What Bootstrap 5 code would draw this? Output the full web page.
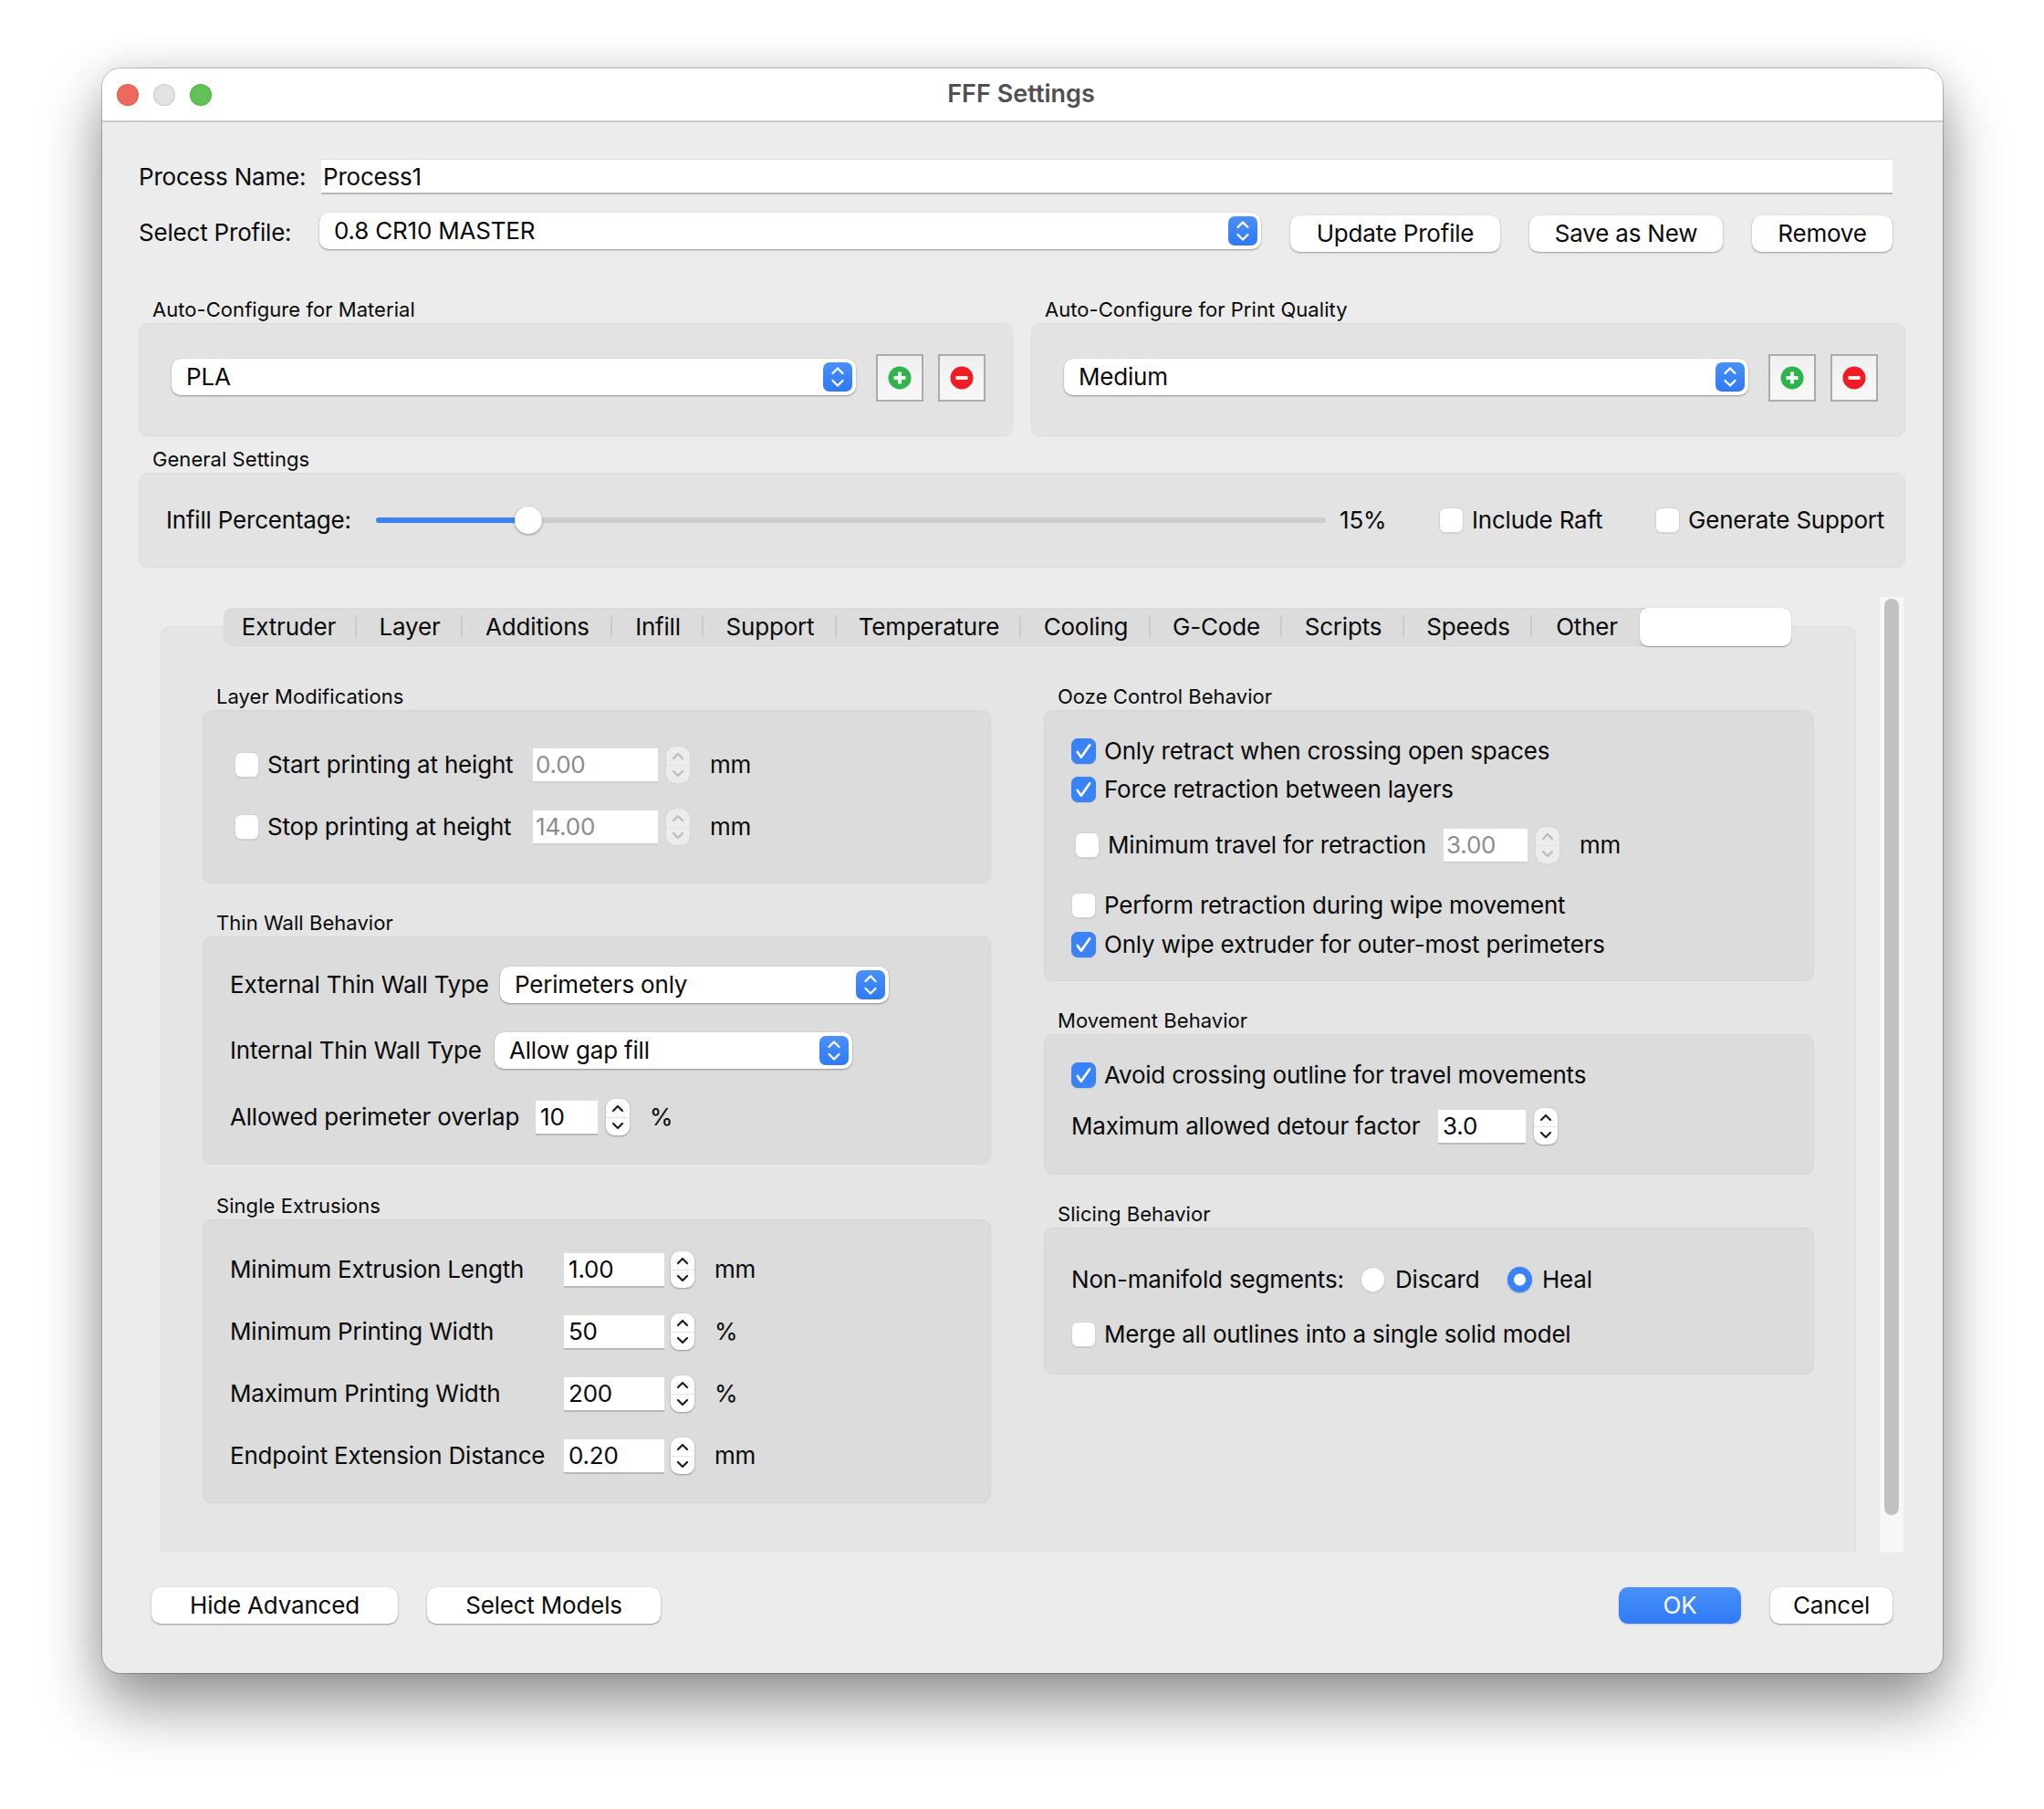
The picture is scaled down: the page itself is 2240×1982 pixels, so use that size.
<!DOCTYPE html>
<html lang="en">
<head>
<meta charset="utf-8">
<title>FFF Settings</title>
<link href="https://cdn.jsdelivr.net/npm/bootstrap@5.3.0/dist/css/bootstrap.min.css" rel="stylesheet">
<style>
html,body{background:#fff;margin:0;min-height:1982px}
body{font-family:Inter,"Liberation Sans",sans-serif;font-size:26px;letter-spacing:-.2px;color:#0a0a0a;line-height:1.2}
label{flex:none}
.x-win{margin:75px 0 0 112px;width:2017px;height:1758px;border-radius:20px;background:#ececec;box-shadow:0 0 0 1px rgba(0,0,0,.22),0 36px 68px rgba(0,0,0,.42),0 0 40px rgba(0,0,0,.1);overflow:hidden}
.x-title{height:59px;background:#fff;border-bottom:2px solid #cbcbcb;display:grid;grid-template-columns:1fr auto 1fr;align-items:center;padding:0 19px 0 16px}
.x-title-text{font-weight:600;color:#505050;font-size:27px;letter-spacing:0}
.x-light{width:24px;height:24px;border-radius:50%;border:1px solid rgba(0,0,0,.12)}
.x-red{background:#ee6a5f}.x-grey{background:#e3e3e3}.x-green{background:#5fc454}
.x-main{padding:40px 41px 0 40px}
.x-r1{height:39px;margin-right:14px}
.x-r2{margin-top:20px;height:40px}
.x-l1{width:200px}.x-l2{width:198px;margin-top:3px}
.x-field.form-control{flex:none;height:39px;border:0;border-top:1px solid #dedede;border-bottom:2px solid #b9b9b9;border-radius:0;background:#fff;padding:0 3px;font-size:26px;letter-spacing:-.2px;color:#0a0a0a;box-shadow:none;line-height:1}
.x-grow.form-control{flex:1 1 0;width:auto;padding-left:2px}
.x-field.form-control:disabled{color:#8c8c8c;background:#fff;opacity:1;border-bottom-color:#cfcfcf}
.x-sel.form-select{flex:none;height:40px;border:0;border-radius:10px;background-color:#fff;padding:0 44px 0 16px;font-size:26px;letter-spacing:-.2px;color:#0a0a0a;line-height:40px;box-shadow:0 1px 2px rgba(0,0,0,.35),0 0 1px rgba(0,0,0,.2);background-image:url("data:image/svg+xml,%3Csvg xmlns='http://www.w3.org/2000/svg' viewBox='0 0 32 32'%3E%3Cdefs%3E%3ClinearGradient id='g' x1='0' y1='0' x2='0' y2='1'%3E%3Cstop offset='0' stop-color='%234a90f8'/%3E%3Cstop offset='1' stop-color='%232f7af5'/%3E%3C/linearGradient%3E%3C/defs%3E%3Crect width='32' height='32' rx='7' fill='url(%23g)'/%3E%3Cpath d='M10.5 12 16 6.5l5.500 5.500M10.500 20l5.500 5.500 5.500-5.500' fill='none' stroke='%23fff' stroke-width='2.300' stroke-linecap='round' stroke-linejoin='round'/%3E%3C/svg%3E");background-size:32px 32px;background-position:right 4px center;background-repeat:no-repeat}
.x-btn.btn{flex:none;height:40px;padding:0;background:#fff;border:0;border-radius:10px;color:#0a0a0a;font-size:26px;letter-spacing:-.2px;box-shadow:0 1px 2px rgba(0,0,0,.35),0 0 1px rgba(0,0,0,.2);line-height:38px}
.x-ok.btn{background:linear-gradient(#4a90f8,#2f7af5);color:#fff;box-shadow:0 1px 2px rgba(0,0,0,.15)}
.x-b1.btn{width:230px;margin:6px 0 0 32px}.x-b2.btn{width:212px;margin:6px 0 0 32px}.x-b3.btn{width:154px;margin:6px 0 0 32px}
.x-prof.form-select{width:1032px}
.x-r3{margin-top:51px}
.x-half{width:958px}
.x-cap{height:30px;padding-left:15px;font-size:22px;letter-spacing:.05px;line-height:30px}
.x-box{background:#e3e3e3;border:1px solid #dcdcdc;border-radius:10px}
.x-boxa{height:124px;padding:33px 0 0 35px}
.x-boxb{height:104px;padding:0 0 0 29px}
.x-gap{margin-left:20px}
.x-m1.form-select{width:750px;margin-top:5px}
.x-sq.btn{flex:none;width:52px;height:52px;padding:0;border:2px solid #ababab;border-radius:0;background:linear-gradient(#f0f0f0,#f8f8f8);display:flex;align-items:center;justify-content:center;margin-left:16px}
.x-sq.x-first.btn{margin-left:22px}
.x-gen{margin-top:10px}
.x-l3{width:230px}
.form-range.x-range{width:1041px;height:30px;padding:0;flex:none}
.x-range::-webkit-slider-runnable-track{height:6px;border-radius:3px;background:linear-gradient(90deg,#3b82f6 16%,#cdcdcd 16%)}
.x-range::-webkit-slider-thumb{-webkit-appearance:none;appearance:none;width:30px;height:30px;margin-top:-12px;border-radius:50%;background:#fff;border:0;box-shadow:0 1px 3px rgba(0,0,0,.4)}
.x-pct{margin-left:15px;width:109px;flex:none}
.form-check-input.x-ck{width:27px;height:28px;margin:0 9px 0 0;flex:none;background-color:#fff;border:1px solid #d2d2d2;border-radius:7px;box-shadow:0 1px 1px rgba(0,0,0,.08)}
.form-check-input.x-ck:checked{background-color:#3a82f7;border-color:#3a82f7;background-image:url("data:image/svg+xml,%3Csvg xmlns='http://www.w3.org/2000/svg' viewBox='0 0 28 28'%3E%3Cpath d='M6.500 15l4.500 6.500L21.500 6.500' fill='none' stroke='%23fff' stroke-width='3' stroke-linecap='round' stroke-linejoin='round'/%3E%3C/svg%3E");background-size:100% 100%}
.form-check-input.x-rd{border-radius:50%}
.form-check-input.x-rd:checked{background-image:radial-gradient(circle,#fff 0,#fff 6px,transparent 7px);box-shadow:0 1px 2px rgba(0,0,0,.2)}
.x-t1{width:201px}
.x-area{margin:32px 0 0 64px;height:1047px}
.x-col-pane{width:1858px;padding-top:12px;flex:none}
.x-tabs{height:42px;margin:0 0 -22px 69px;position:relative;z-index:1;width:1718px;background:#dcdcdc;border-radius:10px;box-shadow:inset 0 0 0 1px #d6d6d6;flex-wrap:nowrap}
.x-tabs .nav-item{display:flex;align-items:center}
.x-tabs .nav-link{padding:0 0 0 2px;height:24px;line-height:24px;text-align:center;color:#0a0a0a;border-right:2px solid #cbcbcb;font-size:26px;white-space:nowrap}
.x-tabs .nav-item:nth-child(1) .nav-link{width:146px;padding-right:3px}
.x-tabs .nav-item:nth-child(2) .nav-link{width:116px}
.x-tabs .nav-item:nth-child(3) .nav-link{width:164px}
.x-tabs .nav-item:nth-child(4) .nav-link{width:100px}
.x-tabs .nav-item:nth-child(5) .nav-link{width:146px}
.x-tabs .nav-item:nth-child(6) .nav-link{width:202px}
.x-tabs .nav-item:nth-child(7) .nav-link{width:142px}
.x-tabs .nav-item:nth-child(8) .nav-link{width:144px}
.x-tabs .nav-item:nth-child(9) .nav-link{width:134px}
.x-tabs .nav-item:nth-child(10) .nav-link{width:140px}
.x-tabs .nav-item:nth-child(11) .nav-link{width:118px;border-right:0}
.x-tabs .nav-item:nth-child(12) .nav-link{width:166px;height:42px;background:#fff;border:0;border-radius:9px;box-shadow:0 1px 1px rgba(0,0,0,.3),0 0 1px rgba(0,0,0,.3)}
.x-pane{height:1015px;background:#e5e5e5;border:1px solid #dfdfdf;border-bottom:0;border-radius:10px 10px 0 0;padding:61px 0 0 45px;gap:58px}
.x-left{width:864px;flex:none}.x-right{width:844px;flex:none}
.x-inner{background:#dcdcdc;border:1px solid #d5d5d5;border-radius:10px}
.x-cap2{margin-top:28px}
.x-cap3{margin-top:30px}
.x-h1{height:190px;padding:39px 0 0 34px}
.x-h2{height:250px;padding:32px 0 0 29px}
.x-h3{height:311px;padding:34px 0 0 29px}
.x-h4{height:297px;padding:29px 0 0 29px}
.x-h5{height:154px;padding:29px 0 0 29px}
.x-h6{height:161px;padding:36px 0 0 29px}
.x-line{height:40px;display:flex;align-items:center}
.x-lin30{height:30px;display:flex;align-items:center}
.x-g28{margin-top:28px}.x-g32{margin-top:32px}.x-g33{margin-top:33px}.x-g12{margin-top:12px}.x-g26{margin-top:26px}.x-g31{margin-top:31px}.x-g13{margin-top:13px}.x-g21{margin-top:21px}.x-g25{margin-top:25px}
.x-lw1{width:291px}.x-lw2{width:296px}.x-lw3{width:290px}.x-lw4{width:335px}.x-lw5{width:366px}.x-lw6{width:368px}.x-lw7{width:402px}.x-lw8{width:317px}
.x-in1.form-control{width:137px}.x-in2.form-control{width:68px;padding-left:5px}.x-in3.form-control{width:110px;padding-left:5px}.x-in4.form-control{width:92px}.x-in5.form-control{width:96px;padding-left:5px}
.x-s1.form-select{width:426px}.x-s2.form-select{width:392px}
.x-step{width:26px;height:40px;margin-left:9px;border-radius:9px;background:#fff;box-shadow:0 1px 2px rgba(0,0,0,.3),0 0 1px rgba(0,0,0,.2);display:flex;flex-direction:column;color:#222;flex:none}
.x-in3+.x-step{margin-left:7px}
.x-step span{flex:1;display:flex;align-items:center;justify-content:center}
.x-step span+span{border-top:1px solid #e3e3e3}
.x-step svg{width:16px;height:10px}
.x-off{background:#ececec;color:#bdbdbd;box-shadow:0 0 1px rgba(0,0,0,.25)}
.x-unit{margin-left:22px}
.x-ind{padding-left:4px}
.x-lab-d{width:123px}
.x-rad-l{margin-left:2px}
.x-sb{margin-left:26px;width:26px;height:1047px;background:#f7f7f7;padding:2px 5px 0;flex:none}
.x-thumb{height:1004px;background:#c1c1c1;border-radius:8px}
.x-foot{padding:38px 55px 0 54px}
.x-f1.btn{width:270px}.x-f2.btn{width:256px;margin-left:32px}.x-f3.btn{width:134px}.x-f4.btn{width:134px;margin-left:32px}
</style>
</head>
<body>
<svg width="0" height="0" class="d-block">
<symbol id="up" viewBox="0 0 16 10"><path d="M3 8l5-5 5 5" fill="none" stroke="currentColor" stroke-width="2.300" stroke-linecap="round" stroke-linejoin="round"/></symbol>
<symbol id="dn" viewBox="0 0 16 10"><path d="M3 2l5 5 5-5" fill="none" stroke="currentColor" stroke-width="2.300" stroke-linecap="round" stroke-linejoin="round"/></symbol>
<symbol id="plus" viewBox="0 0 26 26"><circle cx="13" cy="13" r="12.500" fill="#2fb34c"/><path d="M13 6.500v13M6.500 13h13" stroke="#eef8ee" stroke-width="4"/></symbol>
<symbol id="minus" viewBox="0 0 26 26"><circle cx="13" cy="13" r="12.500" fill="#ee1c25"/><path d="M6.500 13h13" stroke="#fdeeee" stroke-width="4"/></symbol>
</svg>
<div class="x-win">
  <div class="x-title">
    <div class="d-flex gap-3"><span class="x-light x-red"></span><span class="x-light x-grey"></span><span class="x-light x-green"></span></div>
    <div class="x-title-text">FFF Settings</div>
    <div></div>
  </div>
  <div class="x-main">
    <div class="d-flex align-items-center x-r1">
      <label class="x-l1">Process Name:</label>
      <input class="form-control x-field x-grow" value="Process1">
    </div>
    <div class="d-flex align-items-center x-r2">
      <label class="x-l2">Select Profile:</label>
      <select class="form-select x-sel x-prof"><option>0.8 CR10 MASTER</option></select>
      <button class="btn x-btn x-b1">Update Profile</button>
      <button class="btn x-btn x-b2">Save as New</button>
      <button class="btn x-btn x-b3">Remove</button>
    </div>
    <div class="d-flex x-r3">
      <div class="x-half">
        <div class="x-cap">Auto-Configure for Material</div>
        <div class="x-box x-boxa d-flex align-items-start">
          <select class="form-select x-sel x-m1"><option>PLA</option></select>
          <button class="btn x-sq x-first"><svg width="26" height="26"><use href="#plus"/></svg></button>
          <button class="btn x-sq"><svg width="26" height="26"><use href="#minus"/></svg></button>
        </div>
      </div>
      <div class="x-half x-gap">
        <div class="x-cap">Auto-Configure for Print Quality</div>
        <div class="x-box x-boxa d-flex align-items-start">
          <select class="form-select x-sel x-m1"><option>Medium</option></select>
          <button class="btn x-sq x-first"><svg width="26" height="26"><use href="#plus"/></svg></button>
          <button class="btn x-sq"><svg width="26" height="26"><use href="#minus"/></svg></button>
        </div>
      </div>
    </div>
    <div class="x-gen">
      <div class="x-cap">General Settings</div>
      <div class="x-box x-boxb d-flex align-items-center">
        <label class="x-l3">Infill Percentage:</label>
        <input type="range" class="form-range x-range" min="0" max="100" value="15">
        <span class="x-pct">15%</span>
        <input type="checkbox" class="form-check-input x-ck"><label class="x-t1">Include Raft</label>
        <input type="checkbox" class="form-check-input x-ck"><label>Generate Support</label>
      </div>
    </div>
  </div>
  <div class="d-flex x-area">
    <div class="x-col-pane">
      <ul class="nav x-tabs">
        <li class="nav-item"><a class="nav-link">Extruder</a></li>
        <li class="nav-item"><a class="nav-link">Layer</a></li>
        <li class="nav-item"><a class="nav-link">Additions</a></li>
        <li class="nav-item"><a class="nav-link">Infill</a></li>
        <li class="nav-item"><a class="nav-link">Support</a></li>
        <li class="nav-item"><a class="nav-link">Temperature</a></li>
        <li class="nav-item"><a class="nav-link">Cooling</a></li>
        <li class="nav-item"><a class="nav-link">G-Code</a></li>
        <li class="nav-item"><a class="nav-link">Scripts</a></li>
        <li class="nav-item"><a class="nav-link">Speeds</a></li>
        <li class="nav-item"><a class="nav-link">Other</a></li>
        <li class="nav-item"><a class="nav-link active"></a></li>
      </ul>
      <div class="x-pane d-flex">
        <div class="x-left">
          <div class="x-cap">Layer Modifications</div>
          <div class="x-inner x-h1">
            <div class="x-line"><input type="checkbox" class="form-check-input x-ck"><label class="x-lw1">Start printing at height</label><input class="form-control x-field x-in1" value="0.00" disabled><div class="x-step x-off"><span><svg><use href="#up"/></svg></span><span><svg><use href="#dn"/></svg></span></div><span class="x-unit">mm</span></div>
            <div class="x-line x-g28"><input type="checkbox" class="form-check-input x-ck"><label class="x-lw1">Stop printing at height</label><input class="form-control x-field x-in1" value="14.00" disabled><div class="x-step x-off"><span><svg><use href="#up"/></svg></span><span><svg><use href="#dn"/></svg></span></div><span class="x-unit">mm</span></div>
          </div>
          <div class="x-cap x-cap2">Thin Wall Behavior</div>
          <div class="x-inner x-h2">
            <div class="x-line"><label class="x-lw2">External Thin Wall Type</label><select class="form-select x-sel x-s1"><option>Perimeters only</option></select></div>
            <div class="x-line x-g32"><label class="x-lw3">Internal Thin Wall Type</label><select class="form-select x-sel x-s2"><option>Allow gap fill</option></select></div>
            <div class="x-line x-g33"><label class="x-lw4">Allowed perimeter overlap</label><input class="form-control x-field x-in2" value="10"><div class="x-step"><span><svg><use href="#up"/></svg></span><span><svg><use href="#dn"/></svg></span></div><span class="x-unit">%</span></div>
          </div>
          <div class="x-cap x-cap3">Single Extrusions</div>
          <div class="x-inner x-h3">
            <div class="x-line"><label class="x-lw5">Minimum Extrusion Length</label><input class="form-control x-field x-in3" value="1.00"><div class="x-step"><span><svg><use href="#up"/></svg></span><span><svg><use href="#dn"/></svg></span></div><span class="x-unit">mm</span></div>
            <div class="x-line x-g28"><label class="x-lw5">Minimum Printing Width</label><input class="form-control x-field x-in3" value="50"><div class="x-step"><span><svg><use href="#up"/></svg></span><span><svg><use href="#dn"/></svg></span></div><span class="x-unit">%</span></div>
            <div class="x-line x-g28"><label class="x-lw5">Maximum Printing Width</label><input class="form-control x-field x-in3" value="200"><div class="x-step"><span><svg><use href="#up"/></svg></span><span><svg><use href="#dn"/></svg></span></div><span class="x-unit">%</span></div>
            <div class="x-line x-g28"><label class="x-lw5">Endpoint Extension Distance</label><input class="form-control x-field x-in3" value="0.20"><div class="x-step"><span><svg><use href="#up"/></svg></span><span><svg><use href="#dn"/></svg></span></div><span class="x-unit">mm</span></div>
          </div>
        </div>
        <div class="x-right">
          <div class="x-cap">Ooze Control Behavior</div>
          <div class="x-inner x-h4">
            <div class="x-lin30"><input type="checkbox" class="form-check-input x-ck" checked><label>Only retract when crossing open spaces</label></div>
            <div class="x-lin30 x-g12"><input type="checkbox" class="form-check-input x-ck" checked><label>Force retraction between layers</label></div>
            <div class="x-line x-g26 x-ind"><input type="checkbox" class="form-check-input x-ck"><label class="x-lw6">Minimum travel for retraction</label><input class="form-control x-field x-in4" value="3.00" disabled><div class="x-step x-off"><span><svg><use href="#up"/></svg></span><span><svg><use href="#dn"/></svg></span></div><span class="x-unit">mm</span></div>
            <div class="x-lin30 x-g31"><input type="checkbox" class="form-check-input x-ck"><label>Perform retraction during wipe movement</label></div>
            <div class="x-lin30 x-g13"><input type="checkbox" class="form-check-input x-ck" checked><label>Only wipe extruder for outer-most perimeters</label></div>
          </div>
          <div class="x-cap x-cap2">Movement Behavior</div>
          <div class="x-inner x-h5">
            <div class="x-lin30"><input type="checkbox" class="form-check-input x-ck" checked><label>Avoid crossing outline for travel movements</label></div>
            <div class="x-line x-g21"><label class="x-lw7">Maximum allowed detour factor</label><input class="form-control x-field x-in5" value="3.0"><div class="x-step"><span><svg><use href="#up"/></svg></span><span><svg><use href="#dn"/></svg></span></div></div>
          </div>
          <div class="x-cap x-cap2">Slicing Behavior</div>
          <div class="x-inner x-h6">
            <div class="x-line"><label class="x-lw8">Non-manifold segments:</label><input type="radio" name="nm" class="form-check-input x-ck x-rd"><label class="x-lab-d x-rad-l">Discard</label><input type="radio" name="nm" class="form-check-input x-ck x-rd" checked><label class="x-rad-l">Heal</label></div>
            <div class="x-lin30 x-g25"><input type="checkbox" class="form-check-input x-ck"><label>Merge all outlines into a single solid model</label></div>
          </div>
        </div>
      </div>
    </div>
    <div class="x-sb"><div class="x-thumb"></div></div>
  </div>
  <div class="d-flex x-foot">
    <button class="btn x-btn x-f1">Hide Advanced</button>
    <button class="btn x-btn x-f2">Select Models</button>
    <button class="btn x-btn x-ok x-f3 ms-auto">OK</button>
    <button class="btn x-btn x-f4">Cancel</button>
  </div>
</div>
<script src="https://cdn.jsdelivr.net/npm/bootstrap@5.3.0/dist/js/bootstrap.bundle.min.js"></script>
</body>
</html>
